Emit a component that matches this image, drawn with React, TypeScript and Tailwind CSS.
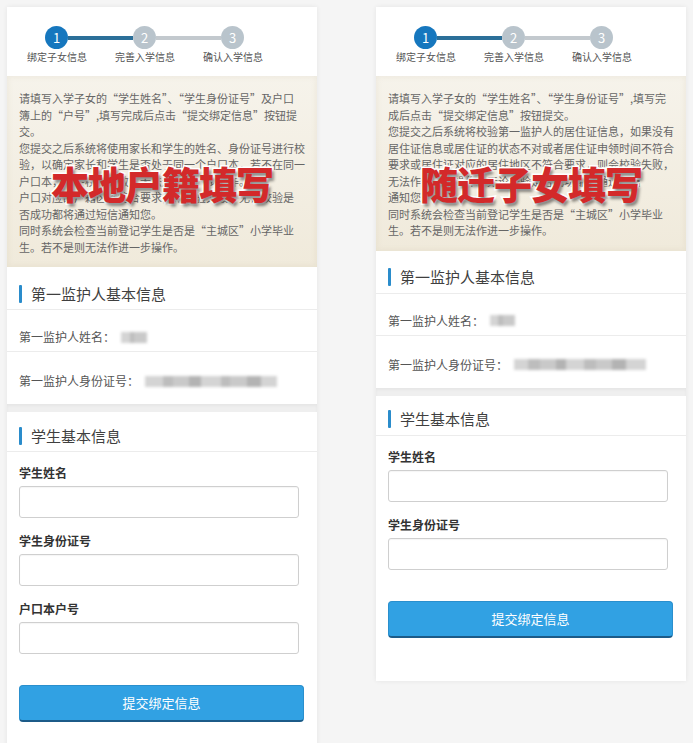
import React from "react";

type Field = { label: string };

type CardProps = {
  notice: string[];
  stamp: string;
  nameBlur: number[];
  idBlur: number[];
  fields: Field[];
};

const STEPS = ["绑定子女信息", "完善入学信息", "确认入学信息"];

function Stepper() {
  return (
    <div className="h-[69px] bg-white pt-[19px]">
      <div className="ml-[38px] flex w-[199px] items-center">
        <span className="flex h-[23px] w-[23px] shrink-0 items-center justify-center rounded-full bg-[#1677be] text-[13px] leading-none text-white">
          1
        </span>
        <span className="h-[4px] flex-1 bg-[#2b6f99]" />
        <span className="flex h-[23px] w-[23px] shrink-0 items-center justify-center rounded-full bg-[#b9c4cc] text-[13px] leading-none text-white">
          2
        </span>
        <span className="h-[4px] flex-1 bg-[#c3c9ce]" />
        <span className="flex h-[23px] w-[23px] shrink-0 items-center justify-center rounded-full bg-[#b9c4cc] text-[13px] leading-none text-white">
          3
        </span>
      </div>
      <div className="ml-[6px] mt-[1px] grid w-[264px] grid-cols-3 text-center text-[10px] leading-[14px] text-[#555]">
        {STEPS.map((s) => (
          <span key={s}>{s}</span>
        ))}
      </div>
    </div>
  );
}

function Blur({ widths }: { widths: number[] }) {
  const tones = ["bg-[#d4d4d4]", "bg-[#bdbdbd]", "bg-[#c9c9c9]", "bg-[#b3b3b3]"];
  return (
    <span className="ml-[6px] inline-flex h-[12px] items-center blur-[1.5px]">
      {widths.map((w, i) => (
        <span
          key={i}
          className={`h-[11px] ${tones[i % tones.length]}`}
          style={{ width: w }}
        />
      ))}
    </span>
  );
}

function SectionHeader({ title, tall }: { title: string; tall?: boolean }) {
  return (
    <div
      className={
        tall
          ? "flex h-[43px] items-center border-b border-[#ececec] px-[12px] pt-[11px]"
          : "flex h-[40px] items-center border-b border-[#ececec] px-[12px] pt-[8px]"
      }
    >
      <span className="h-[18px] w-[3px] rounded-[1px] bg-[#2a8ccb]" />
      <span className="ml-[9px] text-[15px] leading-[20px] text-[#3f3f3f]">
        {title}
      </span>
    </div>
  );
}

function Card({ notice, stamp, nameBlur, idBlur, fields }: CardProps) {
  return (
    <div className="relative w-[310px] bg-[#efefef] shadow-[0_0_5px_rgba(0,0,0,0.07)]">
      <Stepper />

      <div className="bg-gradient-to-b from-[#f6f3eb] to-[#f0eadb] px-[12px] pb-[12px] pt-[14px] text-[11px] leading-[16.5px] text-[#666] shadow-[inset_0_0_6px_rgba(160,140,100,0.12)]">
        {notice.map((line, i) => (
          <div key={i} className="whitespace-nowrap">
            {line}
          </div>
        ))}
      </div>

      <div className="bg-white">
        <SectionHeader title="第一监护人基本信息" tall />
        <div className="h-[42px] border-b border-[#ececec] px-[12px] pt-[19px] text-[12px] leading-[16px] text-[#555]">
          <div className="flex items-center">
            第一监护人姓名：
            <Blur widths={nameBlur} />
          </div>
        </div>
        <div className="h-[52px] px-[12px] pt-[21px] text-[12px] leading-[16px] text-[#555]">
          <div className="flex items-center">
            第一监护人身份证号：
            <Blur widths={idBlur} />
          </div>
        </div>
      </div>

      <div className="h-[8px] shadow-[inset_0_2px_3px_rgba(0,0,0,0.04)]" />

      <div className="bg-white pb-[43px]">
        <SectionHeader title="学生基本信息" />
        <div className="px-[12px] pt-[13px]">
          {fields.map((f, i) => (
            <div key={f.label} className={i === 0 ? "" : "mt-[15px]"}>
              <div className="text-[12px] font-bold leading-[16px] text-[#333]">
                {f.label}
              </div>
              <div className="mt-[5px] h-[32px] w-[280px] rounded-[3px] border border-[#cfcfcf] bg-white shadow-[inset_0_1px_1px_rgba(0,0,0,0.04)]" />
            </div>
          ))}
          <button className="mt-[31px] flex h-[37px] w-[285px] items-center justify-center rounded-[4px] border border-[#2a8fcd] border-b-[2px] border-b-[#1c5b88] bg-[#31a1e3] text-[13px] text-white">
            提交绑定信息
          </button>
        </div>
      </div>

      <div className="absolute left-1/2 top-[157px] -translate-x-1/2 whitespace-nowrap text-[38px] font-black leading-none tracking-[-1px] text-[#d3292a] [-webkit-text-stroke:3px_white] [paint-order:stroke_fill] [text-shadow:2px_3px_3px_rgba(0,0,0,0.45)]">
        {stamp}
      </div>
    </div>
  );
}

export default function App() {
  return (
    <div className="relative h-[743px] w-[693px] overflow-hidden bg-[#f5f5f5] font-['Noto_Sans_CJK_SC','Noto_Sans',sans-serif]">
      <div className="flex items-start gap-[59px] pl-[7px] pt-[7px]">
        <Card
          stamp="本地户籍填写"
          notice={[
            "请填写入学子女的“学生姓名”、“学生身份证号”及户口",
            "簿上的“户号”,填写完成后点击“提交绑定信息”按钮提",
            "交。",
            "您提交之后系统将使用家长和学生的姓名、身份证号进行校",
            "验，以确定家长和学生是否处于同一个户口本，若不在同一",
            "户口本，则会校验失败，无法进行下一步操作。若",
            "户口对应的户籍区不符合要求，则校验失败。无论校验是",
            "否成功都将通过短信通知您。",
            "同时系统会检查当前登记学生是否是“主城区”小学毕业",
            "生。若不是则无法作进一步操作。",
          ]}
          nameBlur={[9, 4, 13]}
          idBlur={[18, 10, 16, 12, 20, 9, 17, 14, 16]}
          fields={[
            { label: "学生姓名" },
            { label: "学生身份证号" },
            { label: "户口本户号" },
          ]}
        />
        <Card
          stamp="随迁子女填写"
          notice={[
            "请填写入学子女的“学生姓名”、“学生身份证号”,填写完",
            "成后点击“提交绑定信息”按钮提交。",
            "您提交之后系统将校验第一监护人的居住证信息，如果没有",
            "居住证信息或居住证的状态不对或者居住证申领时间不符合",
            "要求或居住证对应的居住地区不符合要求，则会校验失败，",
            "无法作进一步操作。无论校验是否成功都将通过短信",
            "通知您。",
            "同时系统会检查当前登记学生是否是“主城区”小学毕业",
            "生。若不是则无法作进一步操作。",
          ]}
          nameBlur={[8, 5, 12]}
          idBlur={[14, 12, 16, 10, 18, 12, 16, 14, 20]}
          fields={[{ label: "学生姓名" }, { label: "学生身份证号" }]}
        />
      </div>
    </div>
  );
}
